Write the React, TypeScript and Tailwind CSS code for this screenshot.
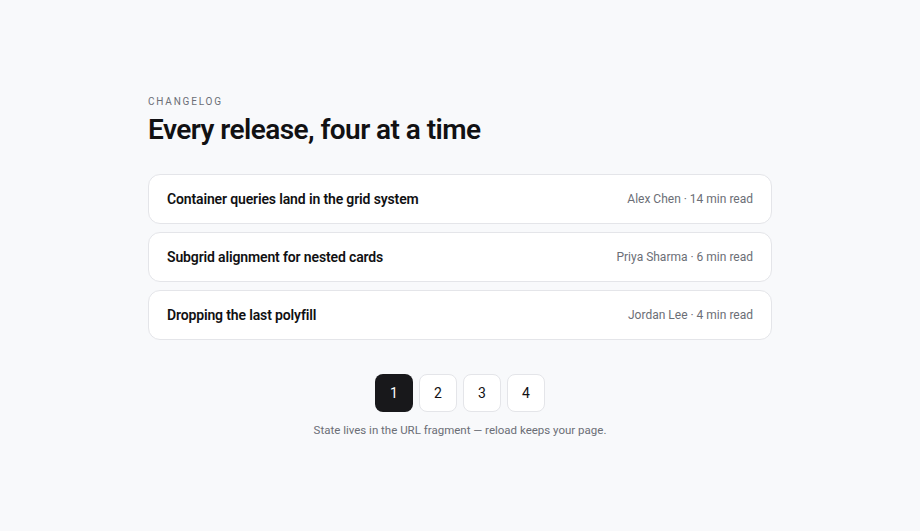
const posts = [
  { title: "Container queries land in the grid system", author: "Alex Chen", mins: 14 },
  { title: "Subgrid alignment for nested cards", author: "Priya Sharma", mins: 6 },
  { title: "Dropping the last polyfill", author: "Jordan Lee", mins: 4 },
];

export default function App() {
  return (
    <div className="min-h-screen bg-[#f8f9fb] font-['Roboto',sans-serif] text-[#111113]">
      <div className="mx-auto w-[624px] pt-[96px]">
        <p className="text-[10px] leading-[12px] uppercase tracking-[0.18em] text-[#6b6e76]">Changelog</p>
        <h1 className="mt-[5px] text-[28px] leading-[34px] font-semibold tracking-[-0.02em]">
          Every release, four at a time
        </h1>
        <div className="mt-[27px] flex flex-col gap-2">
          {posts.map((p) => (
            <div
              key={p.title}
              className="flex h-[50px] items-center justify-between rounded-xl border border-[#e4e5e9] bg-white px-[18px]"
            >
              <span className="text-[14px] font-semibold tracking-[-0.01em]">{p.title}</span>
              <span className="text-[12px] text-[#6b6e76]">
                {p.author} · {p.mins} min read
              </span>
            </div>
          ))}
        </div>
        <div className="mt-[34px] flex justify-center gap-[6px]">
          {[1, 2, 3, 4].map((n) => (
            <button
              key={n}
              className={
                n === 1
                  ? "flex h-[38px] w-[38px] items-center justify-center rounded-lg bg-[#18181b] text-[14px] text-white"
                  : "flex h-[38px] w-[38px] items-center justify-center rounded-lg border border-[#e4e5e9] bg-white text-[14px] text-[#111113]"
              }
            >
              {n}
            </button>
          ))}
        </div>
        <p className="mt-[11px] text-center text-[11.5px] leading-[15px] text-[#6b6e76]">
          State lives in the URL fragment — reload keeps your page.
        </p>
      </div>
    </div>
  );
}
